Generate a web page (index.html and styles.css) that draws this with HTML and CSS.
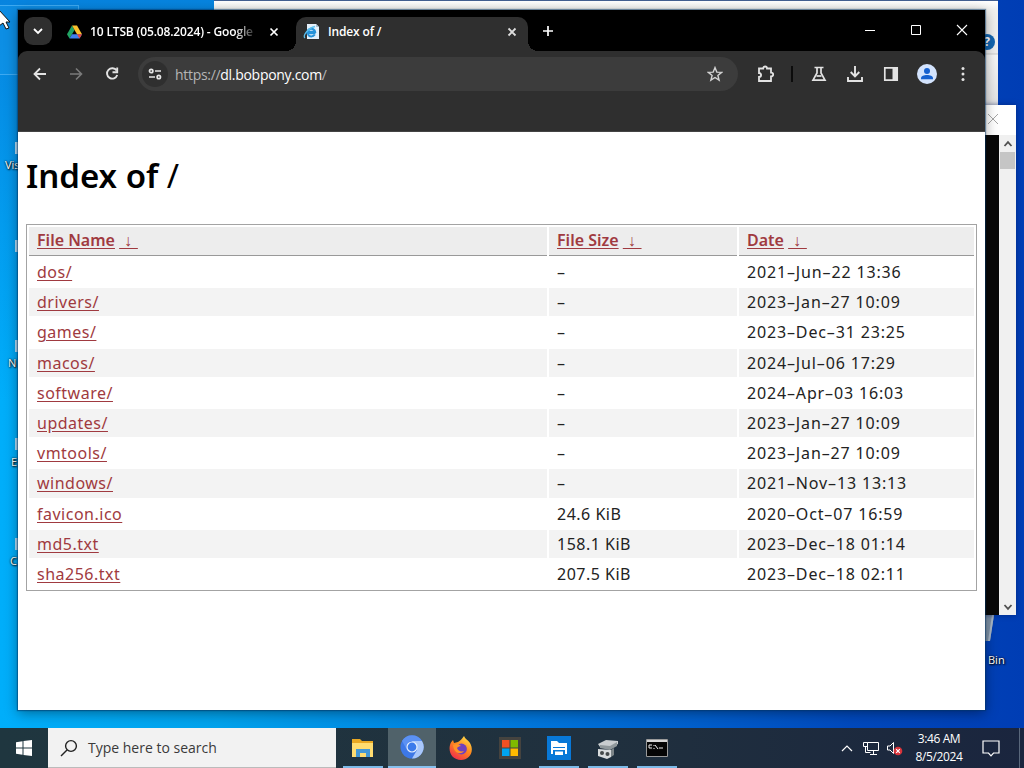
FILE: index.html
```html
<!DOCTYPE html>
<html lang="en">
<head>
  <meta charset="UTF-8" />
  <meta name="viewport" content="width=device-width, initial-scale=1.0"/>
  <title>Index of /</title>
  <link rel="stylesheet" href="styles.css">
</head>
<body>
  <div class="desktop">
    <div class="selection"></div>
    <span class="shortcut shortcut-vis">Vis</span>
    <span class="shortcut shortcut-n">N</span>
    <span class="shortcut shortcut-e">E</span>
    <span class="shortcut shortcut-c">C</span>
    <i class="file-edge edge-1"></i>
    <i class="file-edge edge-2"></i>
    <i class="file-edge edge-3"></i>
    <i class="file-edge edge-4"></i>
    <i class="file-edge edge-5"></i>
    <svg class="bin-icon" width="10" height="34" viewBox="0 0 10 34"><path d="M0 0H9L5 26H0Z" fill="#7f93a8"/><path d="M7 0H9L5 26H3Z" fill="#a9b8c8"/></svg>
    <span class="shortcut shortcut-bin">Bin</span>

    <div class="explorer-window"><span class="help">?</span></div>

    <div class="console-window">
      <div class="console-title">
        <svg width="12" height="12" viewBox="0 0 12 12" fill="none" stroke="#a5a5a5"><path d="M1 1l10 10M11 1L1 11"/></svg>
      </div>
      <div class="console-body">
        <div class="scrollbar">
          <svg width="10" height="8" viewBox="0 0 10 8" fill="none" stroke="#505050" stroke-width="1.8"><path d="M1.5 6L5 2.2 8.5 6"/></svg>
          <div class="thumb"></div>
          <svg class="scroll-down" width="10" height="8" viewBox="0 0 10 8" fill="none" stroke="#505050" stroke-width="1.8"><path d="M1.5 2L5 5.8 8.5 2"/></svg>
        </div>
      </div>
    </div>

    <div class="browser">
      <div class="tabs">
        <div class="tab-search">
          <svg width="12" height="12" viewBox="0 0 12 12" fill="none" stroke="#fff" stroke-width="1.8"><path d="M2 4l4 4 4-4"/></svg>
        </div>
        <div class="tab tab-drive">
          <svg width="15" height="14" viewBox="0 0 15 14"><path d="M5 .5L0 9.2l2.5 4.300L7.500 5z" fill="#21a464"/><path d="M5 .5h5L15 9.200h-5z" fill="#fbc02d"/><path d="M5 9.200h10l-2.500 4.300h-10z" fill="#3f80ee"/><path d="M10 9.200h5l-2.500 4.300z" fill="#e5483b"/></svg>
          <span class="tab-title fade">10 LTSB (05.08.2024) - Google</span>
          <svg class="tab-close" width="10" height="10" viewBox="0 0 10 10" fill="none" stroke="#fff" stroke-width="1.7"><path d="M1.5 1.5l7 7M8.5 1.5l-7 7"/></svg>
        </div>
        <div class="tab tab-active">
          <svg width="17" height="16" viewBox="0 0 17 16"><path d="M4 0h9l3 3v12H4z" fill="#e4f0fa"/><path d="M13 0l3 3h-3z" fill="#a8bed0"/><path d="M12.5 9.2H4.5A3.6 3.6 0 1 1 12 7.8H5" fill="none" stroke="#2592d9" stroke-width="2.2"/><path d="M4.8 10.2c1.2 2.8 5.2 3 7 .3" fill="none" stroke="#2592d9" stroke-width="2"/><path d="M2 14C-1 12 5 4 12 2.5" fill="none" stroke="#5cc0ee" stroke-width="1.3"/></svg>
          <span class="tab-title">Index of /</span>
          <svg class="tab-close" width="10" height="10" viewBox="0 0 10 10" fill="none" stroke="#ddd" stroke-width="1.8"><path d="M1.5 1.5l7 7M8.5 1.5l-7 7"/></svg>
        </div>
        <div class="new-tab">
          <svg width="12" height="12" viewBox="0 0 12 12" stroke="#fff" stroke-width="1.7"><path d="M6 1v10M1 6h10"/></svg>
        </div>
        <div class="window-buttons">
          <span><svg width="12" height="12" viewBox="0 0 12 12" stroke="#fff"><path d="M1 6.5h10"/></svg></span>
          <span><svg width="12" height="12" viewBox="0 0 12 12" fill="none" stroke="#fff"><path d="M1.5 1.5h9v9h-9z"/></svg></span>
          <span><svg width="12" height="12" viewBox="0 0 12 12" stroke="#fff" stroke-width="1.1"><path d="M1 1l10 10M11 1L1 11"/></svg></span>
        </div>
      </div>

      <div class="toolbar">
        <span class="tool"><svg width="16" height="16" viewBox="0 0 16 16" fill="none" stroke="#e3e3e3" stroke-width="1.8"><path d="M14 8H3M8 2.5L2.5 8 8 13.5"/></svg></span>
        <span class="tool"><svg width="16" height="16" viewBox="0 0 16 16" fill="none" stroke="#7b7b7b" stroke-width="1.6"><path d="M2 8h11M8 2.5l5.5 5.5L8 13.5"/></svg></span>
        <span class="tool"><svg width="16" height="16" viewBox="0 0 16 16" fill="none" stroke="#e3e3e3" stroke-width="1.9"><path d="M12.600 4.600A5.200 5.200 0 1 0 13.200 9"/><path d="M13.200 1.500v4.700H8.500"/></svg></span>
        <div class="address">
          <span class="site-info">
            <svg width="14" height="12" viewBox="0 0 14 12" fill="none" stroke="#e8e8e8" stroke-width="1.7"><circle cx="3.2" cy="3" r="1.7"/><path d="M7 3h6M1 9h6"/><circle cx="10.8" cy="9" r="1.7"/></svg>
          </span>
          <span class="url">https://<b>dl.bobpony.com</b>/</span>
          <svg class="star" width="16" height="16" viewBox="0 0 16 16" fill="none" stroke="#d2d2d2" stroke-width="1.4"><path d="M8 1.600l1.800 4.500 4.800.3-3.700 3 1.200 4.700L8 11.500l-4.100 2.600 1.200-4.700-3.700-3 4.800-.3z"/></svg>
        </div>
        <span class="tool tool-ext"><svg width="18" height="18" viewBox="0 0 18 18" fill="none" stroke="#e3e3e3" stroke-width="1.8"><path d="M2 3.500h4.200C6.200.8 10 .8 10 3.500h4v4.200c2.900 0 2.900 3.800 0 3.800V16H2v-4c2.800 0 2.800-4 0-4z"/></svg></span>
        <span class="divider"></span>
        <span class="tool"><svg width="16" height="16" viewBox="0 0 16 16" fill="none" stroke="#e3e3e3" stroke-width="1.7"><path d="M3.500 1.500h9M6 2v5L2 14.200h12L10 7V2"/><path d="M5.500 10h5"/></svg></span>
        <span class="tool"><svg width="18" height="18" viewBox="0 0 18 18" fill="none" stroke="#e3e3e3" stroke-width="1.9"><path d="M9 1v10M4.700 7L9 11.300 13.300 7M2 12v4h14v-4"/></svg></span>
        <span class="tool"><svg width="16" height="16" viewBox="0 0 16 16"><path d="M1.800 1.800h12.400v12.400H1.800z" fill="none" stroke="#e3e3e3" stroke-width="1.7"/><path d="M9.500 2h4.500v12H9.500z" fill="#e3e3e3"/></svg></span>
        <span class="tool"><svg width="20" height="20" viewBox="0 0 20 20"><circle cx="10" cy="10" r="10" fill="#d3e3fd"/><circle cx="10" cy="7" r="3" fill="#1560cf"/><path d="M4 15.200v-1c0-4.200 12-4.200 12 0v1z" fill="#1560cf"/></svg></span>
        <span class="tool"><svg width="16" height="16" viewBox="0 0 16 16" fill="#e3e3e3"><circle cx="8" cy="2.500" r="1.500"/><circle cx="8" cy="8" r="1.500"/><circle cx="8" cy="13.500" r="1.500"/></svg></span>
      </div>

      <div class="page">
        <h1>Index of <span class="slash">/</span></h1>
        <table class="list">
          <thead>
            <tr>
              <th class="col-name"><a href="#">File Name</a> <a href="#" class="sort">&nbsp;↓&nbsp;</a></th>
              <th class="col-size"><a href="#">File Size</a> <a href="#" class="sort">&nbsp;↓&nbsp;</a></th>
              <th class="col-date"><a href="#">Date</a> <a href="#" class="sort">&nbsp;↓&nbsp;</a></th>
            </tr>
          </thead>
          <tbody>
            <tr><td><a href="#">dos/</a></td><td>–</td><td>2021–Jun–22 13:36</td></tr>
            <tr><td><a href="#">drivers/</a></td><td>–</td><td>2023–Jan–27 10:09</td></tr>
            <tr><td><a href="#">games/</a></td><td>–</td><td>2023–Dec–31 23:25</td></tr>
            <tr><td><a href="#">macos/</a></td><td>–</td><td>2024–Jul–06 17:29</td></tr>
            <tr><td><a href="#">software/</a></td><td>–</td><td>2024–Apr–03 16:03</td></tr>
            <tr><td><a href="#">updates/</a></td><td>–</td><td>2023–Jan–27 10:09</td></tr>
            <tr><td><a href="#">vmtools/</a></td><td>–</td><td>2023–Jan–27 10:09</td></tr>
            <tr><td><a href="#">windows/</a></td><td>–</td><td>2021–Nov–13 13:13</td></tr>
            <tr><td><a href="#">favicon.ico</a></td><td>24.6 KiB</td><td>2020–Oct–07 16:59</td></tr>
            <tr><td><a href="#">md5.txt</a></td><td>158.1 KiB</td><td>2023–Dec–18 01:14</td></tr>
            <tr><td><a href="#">sha256.txt</a></td><td>207.5 KiB</td><td>2023–Dec–18 02:11</td></tr>
          </tbody>
        </table>
      </div>
    </div>

    <div class="taskbar">
      <div class="start">
        <svg width="16" height="16" viewBox="0 0 16 16" fill="#fff"><path d="M0 2.200L6.500 1.300V7.500H0zM7.500 1.100L16 0v7.500H7.500zM0 8.500h6.500v6.200L0 13.800zM7.500 8.500H16V16l-8.500-1.100z"/></svg>
      </div>
      <div class="search">
        <svg width="18" height="18" viewBox="0 0 18 18" fill="none" stroke="#222" stroke-width="1.4"><circle cx="11" cy="7" r="5.400"/><path d="M7 11l-6 6"/></svg>
        <span>Type here to search</span>
      </div>
      <div class="apps">
        <span class="app open"><svg width="24" height="24" viewBox="0 0 24 24"><path d="M1 3h8l2 2h11v16H1z" fill="#e9a823"/><path d="M1 7h21v14H1z" fill="#ffdc70"/><path d="M5 21v-8h14v8h-4v-4H9v4z" fill="#4497d5"/></svg></span>
        <span class="app active"><svg width="24" height="24" viewBox="0 0 24 24"><circle cx="12" cy="12" r="11.500" fill="#3d78e6"/><path d="M12 6h10A11.500 11.500 0 0 1 12 23.500L17 15z" fill="#a9c8fb"/><path d="M2 6A11.500 11.500 0 0 1 22 6H12a6 6 0 0 0-5 9z" fill="#5b91f3"/><circle cx="12" cy="12" r="5.600" fill="#e5effd"/><circle cx="12" cy="12" r="4.400" fill="#3b7beb"/></svg></span>
        <span class="app"><svg width="24" height="24" viewBox="0 0 24 24"><defs><linearGradient id="fox" x1=".8" y1="0" x2=".2" y2="1"><stop offset="0" stop-color="#ffe14d"/><stop offset=".45" stop-color="#ff8a1e"/><stop offset="1" stop-color="#f0264f"/></linearGradient></defs><path d="M15 0c1 3 4 4 6 7 5 9-1 17-9 17S-1 17 1 9c.5-2 1.500-3.500 3-5l1 3 4-1c2-1 4-3 6-6z" fill="url(#fox)"/><circle cx="12.500" cy="13" r="5.400" fill="#7141bd"/><path d="M4 9c3-2 6-1 8 1-2 0-3 1-4 2 1 3 4 4 7 3-3 4-10 3-11-6z" fill="#ff9328"/></svg></span>
        <span class="app"><svg width="24" height="24" viewBox="0 0 24 24"><path d="M1 1h22v22H1z" fill="#45433f"/><path d="M4 4h7.500v7.500H4z" fill="#f25022"/><path d="M12.500 4H20v7.500h-7.500z" fill="#7fba00"/><path d="M4 12.500h7.500V20H4z" fill="#00a4ef"/><path d="M12.500 12.500H20V20h-7.500z" fill="#ffb900"/></svg></span>
        <span class="app open"><svg width="24" height="24" viewBox="0 0 24 24"><path d="M0 0h24v24H0z" fill="#0878d7"/><path d="M4 5h6l2 2h8v3H4z" fill="#fff"/><path d="M4 9h16v9h-2v-4H6v4H4z" fill="#fff"/><path d="M6 11.500h12" stroke="#0878d7"/><path d="M8 15.500h8V19H8z" fill="#fff"/></svg></span>
        <span class="app open"><svg width="24" height="24" viewBox="0 0 24 24"><path d="M2 8l8-4 12 1v3l-8 4-10-1z" fill="#c9cdcf"/><path d="M4 9l10 1 7-4v4l-7 4-10-2z" fill="#90989b"/><path d="M2 13l13 1v7l-4 2-9-3z" fill="#d9dcdd"/><path d="M15 14l3-2v7l-3 2z" fill="#7d8588"/><circle cx="6" cy="17" r="2" fill="#45494a"/><circle cx="11.500" cy="18" r="2" fill="#45494a"/></svg></span>
        <span class="app open"><svg width="24" height="24" viewBox="0 0 24 24"><path d="M1.500 3.500h21v17h-21z" fill="#050505" stroke="#9a9a9a"/><path d="M2 4h20v2H2z" fill="#d5d5d5"/><path d="M7 9H4v3h3M9 9v1M9 12v1M10 9l3 4M14 12h4" fill="none" stroke="#eee"/></svg></span>
      </div>
      <div class="tray">
        <svg class="tray-up" width="12" height="8" viewBox="0 0 12 8" fill="none" stroke="#fff" stroke-width="1.2"><path d="M1 7l5-5 5 5"/></svg>
        <svg class="tray-net" width="17" height="15" viewBox="0 0 17 15" fill="none" stroke="#fff"><path d="M5.500 1.500h11v8h-11zM8 13.500h7M11.500 10v3M1.500 1.500h4v4h-4zM3.500 6v5.500h5"/></svg>
        <svg class="tray-sound" width="17" height="15" viewBox="0 0 17 15"><path d="M1.500 5H4l3.500-3.500v11L4 9H1.500z" fill="none" stroke="#fff"/><circle cx="12" cy="10" r="4.300" fill="#d9343b"/><path d="M10.200 8.200l3.600 3.600M13.800 8.200l-3.600 3.600" stroke="#fff" stroke-width="1.2"/></svg>
        <div class="clock"><span>3:46 AM</span><span>8/5/2024</span></div>
        <svg class="tray-note" width="18" height="17" viewBox="0 0 18 17" fill="none" stroke="#fff" stroke-width="1.2"><path d="M1 1h16v12h-5.500L9 15.800 6.500 13H1z"/></svg>
        <span class="show-desktop"></span>
      </div>
    </div>

    <svg class="cursor" width="14" height="22" viewBox="0 0 14 22"><path d="M-1 2l11 12H6l3 6-3 1-3-6-4 3z" fill="#fff" stroke="#111"/></svg>
  </div>
</body>
</html>
```

FILE: styles.css
```css
body {
  margin: 0;
  font-family: "Open Sans", sans-serif;
  overflow: hidden;
}
svg {
  display: block;
  flex: none;
}
.desktop {
  position: relative;
  width: 1024px;
  height: 768px;
  overflow: hidden;
  background: linear-gradient(to right, #00aefa 0, #00a2ec 220px, #0077dc 520px, #0049bd 850px, #003db4 100%);
}
.desktop::before {
  content: "";
  position: absolute;
  width: 240px;
  height: 400px;
  background: linear-gradient(#0784df, #00a5f800);
}

/* desktop items */
.selection {
  position: absolute;
  left: -2px;
  top: 5px;
  width: 79px;
  height: 68px;
  border: 1px solid #3eaaf2;
  background: #1c9ceb55;
}
.shortcut {
  position: absolute;
  color: #fff;
  font-size: 11px;
  line-height: 14px;
  text-shadow: 1px 1px 2px #000, 0 0 2px #000;
}
.shortcut-vis { left: 5px; top: 158px; }
.shortcut-n { left: 8px; top: 356px; }
.shortcut-e { left: 11px; top: 455px; }
.shortcut-c { left: 10px; top: 554px; }
.shortcut-bin { left: 988px; top: 653px; }
.file-edge {
  position: absolute;
  left: 15px;
  width: 3px;
  height: 12px;
  background: #b5dbf4;
}
.edge-1 { top: 142px; }
.edge-2 { top: 240px; }
.edge-3 { top: 340px; }
.edge-4 { top: 438px; }
.edge-5 { top: 538px; }
.bin-icon {
  position: absolute;
  left: 985px;
  top: 615px;
}

/* windows behind the browser */
.explorer-window {
  position: absolute;
  left: 214px;
  top: 0;
  width: 784px;
  height: 120px;
  box-sizing: border-box;
  border-top: 1px solid #435f91;
  background: linear-gradient(#fff 0, #f0f0ee 9px, #eee 52px, #ccc 53px, #f6f6f6 54px, #ddd 100%);
}
.help {
  position: absolute;
  right: 3px;
  top: 33px;
  width: 16px;
  height: 16px;
  border-radius: 50%;
  background: #1265b0;
  color: #fff;
  font-size: 12px;
  line-height: 16px;
  font-weight: bold;
  text-align: center;
}
.console-window {
  position: absolute;
  left: 960px;
  top: 105px;
  width: 56px;
  height: 510px;
  display: flex;
  flex-direction: column;
  background: #fff;
  box-shadow: 0 0 5px #001b5e99;
}
.console-title {
  height: 30px;
  padding: 8px 0 0 27px;
  box-sizing: border-box;
}
.console-body {
  flex: 1;
  display: flex;
  justify-content: flex-end;
  background: #080808;
}
.scrollbar {
  display: flex;
  flex-direction: column;
  align-items: center;
  width: 17px;
  padding: 5px 0 4px;
  box-sizing: border-box;
  background: #f0f0f0;
}
.thumb {
  width: 15px;
  height: 17px;
  margin-top: 4px;
  background: #c5c5c5;
}
.scroll-down {
  margin-top: auto;
}

/* browser */
.browser {
  position: absolute;
  left: 18px;
  top: 10px;
  width: 967px;
  height: 700px;
  display: flex;
  flex-direction: column;
  background: #000;
  box-shadow: 0 0 1px 1px #00336680, 0 3px 12px #00000066;
}
.tabs {
  display: flex;
  height: 41px;
  color: #fff;
  background: #000;
}
.tab-search {
  display: flex;
  align-items: center;
  justify-content: center;
  width: 28px;
  height: 28px;
  margin: 7px 0 0 6px;
  border-radius: 9px;
  background: #2f2f2f;
}
.tab {
  display: flex;
  align-items: center;
  box-sizing: border-box;
  height: 34px;
  margin-top: 7px;
  padding-bottom: 5px;
}
.tab-drive {
  width: 227px;
  padding-left: 15px;
}
.tab-title {
  margin-left: 8px;
  font-size: 12px;
  font-weight: 600;
  letter-spacing: -0.15px;
  white-space: nowrap;
}
.fade {
  width: 164px;
  overflow: hidden;
  -webkit-mask-image: linear-gradient(to right, #000 145px, transparent 168px);
  mask-image: linear-gradient(to right, #000 145px, transparent 168px);
}
.tab-drive .tab-close {
  margin-left: 15px;
}
.tab-active {
  position: relative;
  width: 232px;
  margin-left: 17px;
  padding: 0 11px 5px 7px;
  border-radius: 10px 10px 0 0;
  background: #2f2f2f;
}
.tab-active::before,
.tab-active::after {
  content: "";
  position: absolute;
  bottom: 0;
  width: 10px;
  height: 10px;
}
.tab-active::before {
  left: -10px;
  background: radial-gradient(circle at 0 0, transparent 10px, #2f2f2f 10px);
}
.tab-active::after {
  right: -10px;
  background: radial-gradient(circle at 100% 0, transparent 10px, #2f2f2f 10px);
}
.tab-active .tab-close {
  margin-left: auto;
}
.new-tab {
  padding: 15px 0 0 14px;
}
.window-buttons {
  display: flex;
  margin-left: auto;
}
.window-buttons span {
  display: flex;
  justify-content: center;
  width: 46px;
  padding-top: 14px;
}
.toolbar {
  display: flex;
  align-items: flex-start;
  height: 81px;
  box-sizing: border-box;
  padding: 6px 4px 0;
  border-radius: 9px 9px 0 0;
  border-bottom: 1px solid #444;
  background: #2f2f2f;
}
.tool {
  display: flex;
  align-items: center;
  justify-content: center;
  width: 36px;
  height: 34px;
}
.address {
  display: flex;
  align-items: center;
  width: 600px;
  height: 34px;
  margin-left: 8px;
  padding: 0 15px 0 4px;
  box-sizing: border-box;
  border-radius: 17px;
  background: #3c3c3c;
}
.site-info {
  display: flex;
  align-items: center;
  justify-content: center;
  width: 26px;
  height: 26px;
  border-radius: 50%;
  background: #2f2f2f;
}
.url {
  margin-left: 7px;
  font-size: 14px;
  letter-spacing: -0.3px;
  color: #b5b5b5;
}
.url b {
  font-weight: normal;
  color: #fff;
}
.star {
  margin-left: auto;
}
.tool-ext {
  margin-left: 10px;
}
.divider {
  width: 2px;
  height: 16px;
  margin: 9px 8px 0 7px;
  background: #0c0c0c;
}

/* directory listing */
.page {
  flex: 1;
  padding: 0 8px;
  background: #fff;
  color: #222;
  font-family: "Noto Sans", sans-serif;
}
.page h1 {
  margin: 21px 0 25px;
  font-size: 33px;
  line-height: 46px;
  font-weight: 600;
  color: #000;
}
.slash {
  font-weight: normal;
}
.list {
  width: 951px;
  table-layout: fixed;
  border: 1px solid #a3a3a3;
  border-spacing: 2px;
  font-size: 16px;
}
.list th,
.list td {
  height: 28.2px;
  box-sizing: border-box;
  padding: 0 8px;
  text-align: left;
  line-height: 22px;
  white-space: nowrap;
}
.list th {
  height: 29px;
  padding-bottom: 2px;
  border-bottom: 1px solid #999;
  background: #ededed;
  font-weight: 600;
}
.list td {
  letter-spacing: 0.5px;
}
.list td:last-child {
  letter-spacing: 0.85px;
}
.col-name { width: 518px; }
.col-size { width: 188px; }
.list tbody tr:nth-child(even) td {
  background: #f3f3f3;
}
.list a {
  color: #a03a40;
  text-underline-offset: 2px;
}
.list .sort {
  letter-spacing: 0.8px;
}

/* taskbar */
.taskbar {
  position: absolute;
  left: 0;
  bottom: 0;
  width: 1024px;
  height: 40px;
  display: flex;
  background: linear-gradient(to right, #1f363f, #20303e 60%, #1a253e);
}
.start {
  display: flex;
  align-items: center;
  justify-content: center;
  width: 48px;
}
.search {
  display: flex;
  align-items: center;
  width: 288px;
  padding-left: 12px;
  box-sizing: border-box;
  border-bottom: 1px solid #bbb;
  background: #f2f2f2;
  color: #3a3a3a;
}
.search span {
  margin-left: 10px;
  font-size: 14px;
}
.apps {
  display: flex;
  gap: 1px;
  margin-left: 3px;
}
.app {
  display: flex;
  align-items: center;
  justify-content: center;
  width: 48px;
}
.open {
  background: linear-gradient(#7cbae8, #7cbae8) center bottom / 40px 2px no-repeat;
}
.active {
  background: #50626a;
  border-bottom: 2px solid #86c0ee;
  height: 38px;
}
.tray {
  display: flex;
  align-items: center;
  margin-left: auto;
  color: #fff;
}
.tray-net {
  margin-left: 9px;
}
.tray-sound {
  margin-left: 7px;
}
.clock {
  display: flex;
  flex-direction: column;
  align-items: center;
  width: 60px;
  margin-left: 6px;
  font-size: 12px;
  line-height: 18px;
  letter-spacing: -0.4px;
}
.tray-note {
  margin-left: 13px;
}
.show-desktop {
  width: 4px;
  height: 40px;
  margin-left: 19px;
  border-left: 1px solid #59677b;
}
.cursor {
  position: absolute;
  left: 0;
  top: 8px;
}
```
